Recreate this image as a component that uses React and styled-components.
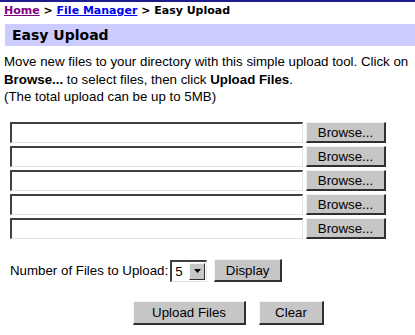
import React from "react";
import styled, { createGlobalStyle } from "styled-components";

const Global = createGlobalStyle`
  html, body { margin: 0; padding: 0; background: #fff; }
  body { font-family: "Liberation Sans", Arial, sans-serif; font-size: 13.3px; color: #000; }
`;

const Page = styled.div`
  width: 415px;
  border-top: 2px solid #1c1c8c;
`;

const Crumbs = styled.div`
  font-family: "DejaVu Sans", Verdana, sans-serif;
  font-weight: bold;
  font-size: 11px;
  box-sizing: border-box;
  height: 22px;
  padding: 1px 4px 0;
  line-height: 16px;
`;

const Crumb = styled.a`
  color: ${(p) => (p.$visited ? "#800080" : "#0000ee")};
  text-decoration: underline;
`;

const Title = styled.div`
  background: #ccccff;
  margin-left: 5px;
  height: 22px;
  padding-left: 7px;
  display: flex;
  align-items: center;
  font-family: "DejaVu Sans", Verdana, sans-serif;
  font-weight: bold;
  font-size: 14px;
`;

const Intro = styled.p`
  margin: 7px 0 0 4px;
  line-height: 17.5px;
`;

const FileList = styled.div`
  padding: 16.5px 0 0 10px;
  display: flex;
  flex-direction: column;
  gap: 3px;
`;

const FileRow = styled.div`
  display: flex;
  align-items: center;
  gap: 3px;
`;

const TextBox = styled.div`
  box-sizing: border-box;
  width: 293px;
  height: 21px;
  background: #fff;
  border-top: 2px solid #404040;
  border-left: 2px solid #404040;
  border-right: 1px solid #e4e4e4;
  border-bottom: 1px solid #e4e4e4;
`;

const Button = styled.button`
  font-family: "Liberation Sans", Arial, sans-serif;
  font-size: 13.3px;
  color: #000;
  background: #c6c6c6;
  width: ${(p) => p.$w}px;
  height: ${(p) => p.$h || 21}px;
  margin-left: ${(p) => p.$ml || 0}px;
  padding: 0;
  border-top: 1px solid #f4f4f4;
  border-left: 1px solid #f4f4f4;
  border-right: 2px solid #303030;
  border-bottom: 2px solid #303030;
  box-sizing: border-box;
  cursor: pointer;
`;

const CountRow = styled.div`
  display: flex;
  align-items: center;
  margin: 20px 0 0 10px;
  height: 23px;
`;

const Select = styled.div`
  box-sizing: border-box;
  margin-left: 2px;
  width: 37px;
  height: 22px;
  border-top: 2px solid #404040;
  border-left: 2px solid #404040;
  border-right: 1px solid #e4e4e4;
  border-bottom: 1px solid #e4e4e4;
  display: flex;
  align-items: center;
  justify-content: space-between;
  padding-left: 3px;
`;

const Arrow = styled.div`
  box-sizing: border-box;
  width: 16px;
  height: 17px;
  margin-right: 1px;
  background: #c6c6c6;
  border-top: 1px solid #f4f4f4;
  border-left: 1px solid #f4f4f4;
  border-right: 1px solid #303030;
  border-bottom: 1px solid #303030;
  display: flex;
  align-items: center;
  justify-content: center;
`;

const Actions = styled.div`
  display: flex;
  gap: 13px;
  margin-top: 19px;
  padding-left: 133px;
`;

export default function App() {
  return (
    <Page>
      <Global />
      <Crumbs>
        <Crumb $visited href="#">Home</Crumb> &gt; <Crumb href="#">File Manager</Crumb> &gt; Easy Upload
      </Crumbs>
      <Title>Easy Upload</Title>
      <Intro>
        Move new files to your directory with this simple upload tool. Click on <b>Browse...</b> to select files, then click <b>Upload Files</b>.
        <br />
        (The total upload can be up to 5MB)
      </Intro>
      <FileList>
        {[0, 1, 2, 3, 4].map((i) => (
          <FileRow key={i}>
            <TextBox />
            <Button $w={80}>Browse...</Button>
          </FileRow>
        ))}
      </FileList>
      <CountRow>
        Number of Files to Upload:
        <Select>
          5
          <Arrow>
            <svg width="7" height="4" viewBox="0 0 7 4"><path d="M0 0h7L3.5 4z" fill="#000" /></svg>
          </Arrow>
        </Select>
        <Button $w={68} $h={23} $ml={7}>Display</Button>
      </CountRow>
      <Actions>
        <Button $w={113} $h={24}>Upload Files</Button>
        <Button $w={65} $h={24}>Clear</Button>
      </Actions>
    </Page>
  );
}
